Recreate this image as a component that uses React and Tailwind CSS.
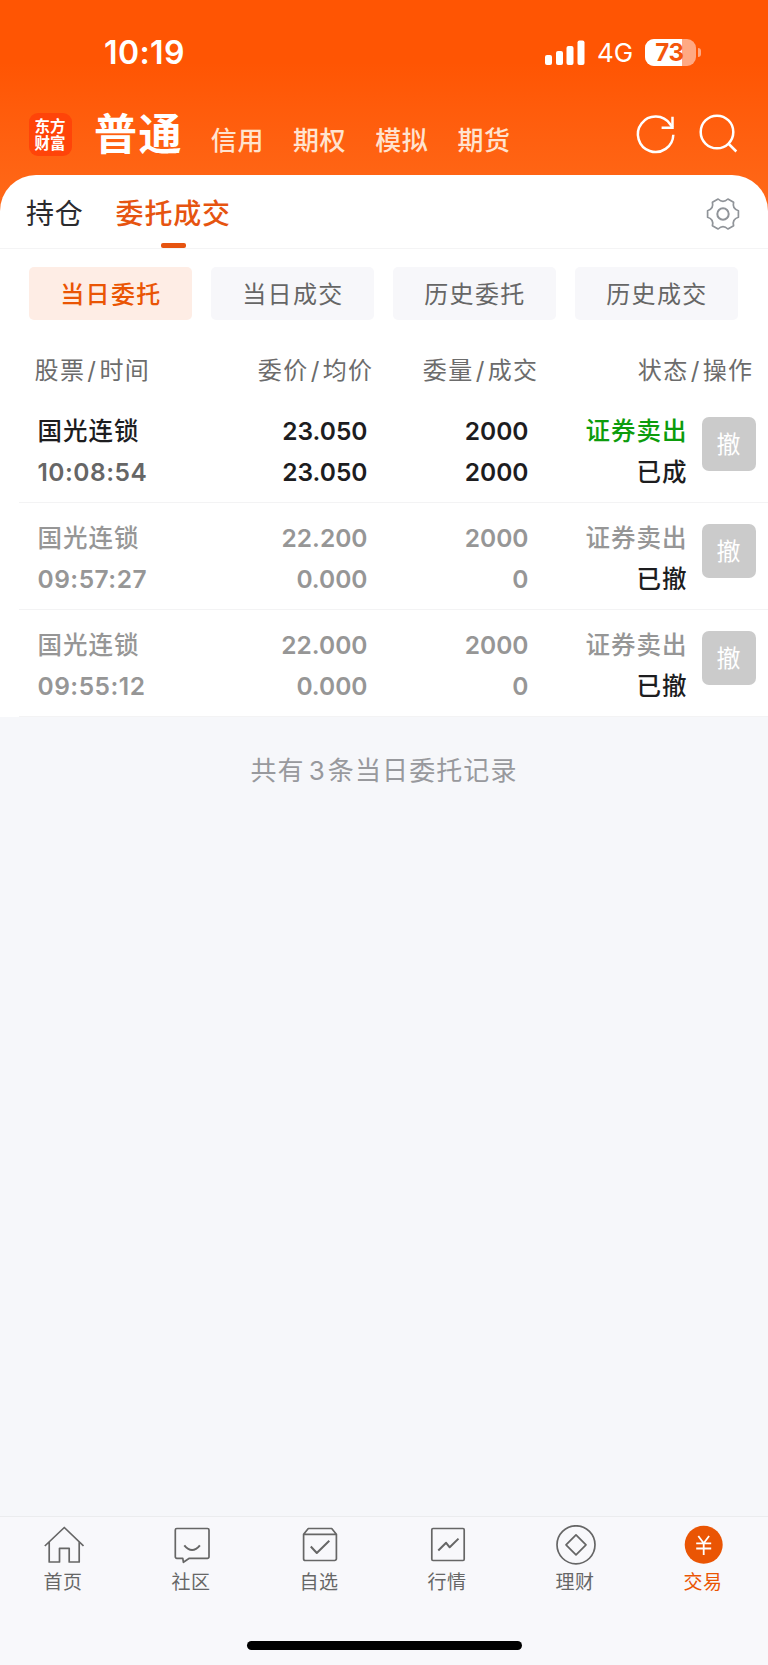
import { useState } from "react";
import clsx from "clsx";

const markets = ["信用", "期权", "模拟", "期货"];
const filters = ["当日委托", "当日成交", "历史委托", "历史成交"];

const orders = [
  {
    name: "国光连锁",
    time: "10:08:54",
    price: "23.050",
    avgPrice: "23.050",
    amount: "2000",
    dealt: "2000",
    side: "证券卖出",
    status: "已成",
    done: true,
  },
  {
    name: "国光连锁",
    time: "09:57:27",
    price: "22.200",
    avgPrice: "0.000",
    amount: "2000",
    dealt: "0",
    side: "证券卖出",
    status: "已撤",
    done: false,
  },
  {
    name: "国光连锁",
    time: "09:55:12",
    price: "22.000",
    avgPrice: "0.000",
    amount: "2000",
    dealt: "0",
    side: "证券卖出",
    status: "已撤",
    done: false,
  },
];

const navItems = [
  {
    label: "首页",
    icon: (
      <path d="M.8 21 20.3 2.5 39.5 21M5.2 17v20h10.3V23.3h9.7V37h10V17" />
    ),
  },
  {
    label: "社区",
    icon: (
      <>
        <path d="M4.8 3.5h30.7a1.5 1.5 0 0 1 1.5 1.5v26.8a1.5 1.5 0 0 1-1.5 1.5H17.3L11.4 37.3l-.6-4h-6a1.5 1.5 0 0 1-1.5-1.5V5a1.5 1.5 0 0 1 1.5-1.5Z" />
        <path d="M12.3 20.3q7.8 9.4 15.6 0" strokeWidth="2" />
      </>
    ),
  },
  {
    label: "自选",
    icon: (
      <>
        <path d="M3.6 9.3 8.3 3.5h23.4l4.7 5.8v24.4a1.8 1.8 0 0 1-1.8 1.8H5.4a1.8 1.8 0 0 1-1.8-1.8ZM3.6 9.3h32.8" />
        <path d="m10.8 21.5 6 6.5L29.3 15.8" strokeWidth="2" />
      </>
    ),
  },
  {
    label: "行情",
    icon: (
      <>
        <rect x="3.8" y="3.5" width="32.4" height="32" rx="1.2" />
        <path d="m10.3 25.5 7.8-7.7 3.6 4.5 8.8-8.7" strokeWidth="2" />
      </>
    ),
  },
  {
    label: "理财",
    icon: (
      <>
        <circle cx="20" cy="19.8" r="19" />
        <path d="m20 9.8 10 10-10 10-10-10Z" />
      </>
    ),
  },
  {
    label: "交易",
    active: true,
    icon: (
      <>
        <circle cx="19.7" cy="19.8" r="19" fill="#ea5504" stroke="none" />
        <path
          d="m14.3 11 5.4 7.3L25.1 11M12.2 18.3h15M12.2 23.5h15M19.7 18.3V30"
          stroke="#fff"
          strokeWidth="1.8"
        />
      </>
    ),
  },
];

const StatusBar = () => {
  return (
    <div className="flex h-[105px] items-center justify-between pl-[104px] pr-[67px] text-white">
      <span className="text-[32px] leading-[40px] font-semibold tracking-[0.4px]">
        10:19
      </span>
      <div className="flex items-center">
        <svg width="40" height="26" viewBox="0 0 40 26" fill="#fff">
          <rect x="0" y="15" width="7" height="10" rx="2" />
          <rect x="11" y="11" width="7" height="14" rx="2" />
          <rect x="21.5" y="6" width="7" height="19" rx="2" />
          <rect x="32.5" y="0.5" width="7" height="24.5" rx="2" />
        </svg>
        <span className="ml-3 w-[36px] text-[26px] leading-7">4G</span>
        <div className="relative ml-[12px] flex h-[27px] w-[51px] items-center justify-center overflow-hidden rounded-[9px] bg-[#ffa983]">
          <div className="absolute inset-y-0 left-0 w-[37px] bg-white" />
          <span className="relative mr-[2px] text-[24px] leading-[27px] font-bold tracking-[-0.2px] text-[#f4560c]">
            73
          </span>
        </div>
        <div className="ml-[2px] h-[9px] w-[3px] rounded-r-full bg-[#ffa983]" />
      </div>
    </div>
  );
};

const MarketBar = () => {
  return (
    <div className="flex h-[70px] items-start pl-[29px] pr-[28px] text-white">
      <div className="mt-2 flex h-[43px] w-[43px] flex-col items-center justify-center rounded-[9px] bg-[#ff4409] pr-[1px] text-[15.5px] leading-[17px] font-bold">
        <span>东方</span>
        <span>财富</span>
      </div>
      <span className="ml-[22px] mt-1 text-[43px] leading-[50px] font-bold tracking-[1.4px]">
        普通
      </span>
      <div className="ml-[28px] mt-[20px] flex gap-[29px]">
        {markets.map((market) => (
          <span
            key={market}
            className="text-[26px] leading-8 font-medium tracking-[0.6px] text-[#ffe3cf]"
          >
            {market}
          </span>
        ))}
      </div>
      <div className="ml-auto mt-[7px] flex gap-[22px]">
        <svg
          width="42"
          height="44"
          viewBox="0 0 42 44"
          fill="none"
          stroke="#fff"
          strokeWidth="2.5"
        >
          <path d="M39.3 22.7A17.7 17.7 0 1 1 36.2 12.3L38.5 15.5" />
          <path d="M38.5 4.7v11H27.6" />
        </svg>
        <svg
          width="42"
          height="44"
          viewBox="0 0 42 44"
          fill="none"
          stroke="#fff"
          strokeWidth="2.5"
        >
          <circle cx="19" cy="20" r="16.3" />
          <path d="m30.3 31.5 8 8" />
        </svg>
      </div>
    </div>
  );
};

const GearIcon = () => (
  <svg
    width="36"
    height="36"
    viewBox="-18 -18 36 36"
    fill="none"
    stroke="#909499"
    strokeWidth="1.7"
    strokeLinejoin="round"
  >
    <path d="M15.4-3.3V3.3Q9 5.2 10.6 11.7L4.9 15Q0 10.4-4.9 15L-10.6 11.7Q-9 5.2-15.4 3.3V-3.3Q-9-5.2-10.6-11.7L-4.9-15Q0-10.4 4.9-15L10.6-11.7Q9-5.2 15.4-3.3Z" />
    <circle r="5.7" strokeWidth="2" />
  </svg>
);

const Heading = ({ left, right, className }) => (
  <span className={className}>
    {left}
    <span className="mx-[2px]">/</span>
    {right}
  </span>
);

const OrderRow = ({ order }) => {
  const { done } = order;
  return (
    <div className="ml-[19px] flex h-[107px] border-b border-[#f3f3f4] pl-[18.5px] pt-[15px] text-[24.5px] leading-[41px] font-medium tracking-[1px]">
      <div className="flex w-[160px] flex-col">
        <span className={done ? "text-[#1d1d1f]" : "text-[#969696]"}>
          {order.name}
        </span>
        <span
          className={clsx(
            "font-semibold tracking-[0.5px]",
            done ? "text-[#666]" : "text-[#969696]",
          )}
        >
          {order.time}
        </span>
      </div>
      <div
        className={clsx(
          "flex w-[170px] flex-col text-right font-semibold tracking-normal",
          done ? "text-[#1d1d1f]" : "text-[#969696]",
        )}
      >
        <span>{order.price}</span>
        <span>{order.avgPrice}</span>
      </div>
      <div
        className={clsx(
          "flex w-[161px] flex-col text-right font-semibold tracking-normal",
          done ? "text-[#1d1d1f]" : "text-[#969696]",
        )}
      >
        <span>{order.amount}</span>
        <span>{order.dealt}</span>
      </div>
      <div className="flex w-[159px] flex-col text-right">
        <span className={done ? "text-[#0c9c0c]" : "text-[#969696]"}>
          {order.side}
        </span>
        <span className="text-[#1d1d1f]">{order.status}</span>
      </div>
      <button className="ml-[14px] mt-[6px] flex h-[54px] w-[54px] items-center justify-center rounded-[7px] bg-[#cbcbcb] text-[24px] font-normal tracking-normal text-white">
        撤
      </button>
    </div>
  );
};

const BottomNav = () => {
  return (
    <div className="flex h-[149px] flex-col border-t border-[#ebecee] bg-[#f8f8fb]">
      <div className="grid grid-cols-6">
        {navItems.map((item) => (
          <div key={item.label} className="flex flex-col items-center pt-[8px]">
            <svg
              width="40"
              height="40"
              viewBox="0 0 40 40"
              fill="none"
              stroke="#666"
              strokeWidth="1.7"
              strokeLinejoin="round"
            >
              {item.icon}
            </svg>
            <span
              className={clsx(
                "mt-[5px] mr-[2px] text-[19px] leading-[26px] tracking-[0.4px]",
                item.active ? "text-[#ea5504]" : "text-[#666]",
              )}
            >
              {item.label}
            </span>
          </div>
        ))}
      </div>
      <div className="mx-auto mt-auto mb-[15px] h-[9px] w-[275px] rounded-full bg-black" />
    </div>
  );
};

const App = () => {
  const [filter, setFilter] = useState("当日委托");
  return (
    <div className="flex h-[1665px] flex-col bg-[#f6f7fa] font-['Inter','Noto_Sans_CJK_SC',sans-serif]">
      {/* Header */}
      <div className="bg-linear-to-b from-[#ff5503] from-25% to-[#ff6e1c]">
        <StatusBar />
        <MarketBar />
        <div className="flex h-[74px] items-center rounded-t-[36px] border-b border-[#f4f4f5] bg-white pt-[4px] pl-[26px] pr-[27px] text-[28px] leading-[38px] tracking-[0.8px]">
          <span className="text-[#2b2b2e]">持仓</span>
          <span className="relative ml-[32px] font-medium text-[#e65410]">
            委托成交
            <span className="absolute -bottom-[15px] left-[45px] h-[5px] w-[25px] rounded-[2px] bg-[#e65410]" />
          </span>
          <span className="ml-auto">
            <GearIcon />
          </span>
        </div>
      </div>

      {/* Orders */}
      <div className="bg-white">
        <div className="flex gap-[19px] pl-[29.4px] pt-[18px]">
          {filters.map((item) => (
            <button
              key={item}
              onClick={() => setFilter(item)}
              className={clsx(
                "h-[53px] w-[163px] rounded-[5px] pt-[2px] text-[24px] tracking-[1.3px]",
                item === filter
                  ? "bg-[#feede5] font-medium text-[#ea5504]"
                  : "bg-[#f7f7fa] text-[#666]",
              )}
            >
              {item}
            </button>
          ))}
        </div>
        <div className="flex h-[76px] items-center pt-[25px] pl-[34.5px] text-[24px] tracking-[1.4px] text-[#6c6c6c]">
          <Heading left="股票" right="时间" className="w-[179px]" />
          <Heading left="委价" right="均价" className="w-[160px] text-right" />
          <Heading left="委量" right="成交" className="w-[165px] text-right" />
          <Heading left="状态" right="操作" className="w-[215px] text-right" />
        </div>
        {orders.map((order) => (
          <OrderRow key={order.time} order={order} />
        ))}
      </div>

      <div className="pt-[34px] text-center text-[26px] leading-[40px] tracking-[1.1px] text-[#98999d]">
        共有<span className="mr-[2px] ml-[4px]">3</span>条当日委托记录
      </div>

      <div className="mt-auto">
        <BottomNav />
      </div>
    </div>
  );
};

export default App;
